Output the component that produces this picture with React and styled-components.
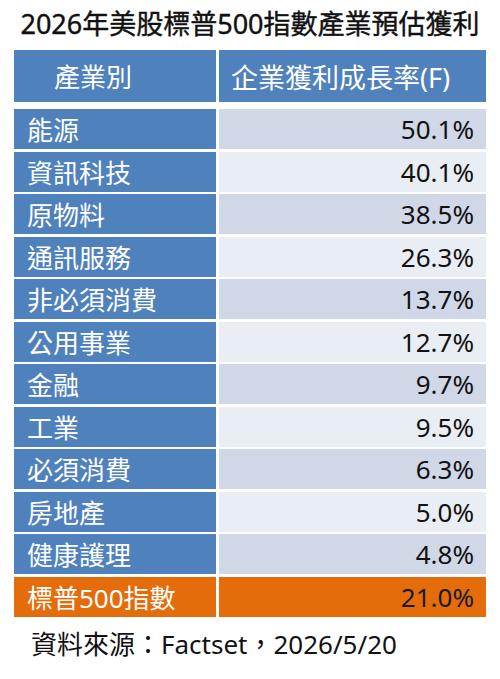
import React from "react";
import styled, { createGlobalStyle } from "styled-components";

const GlobalStyle = createGlobalStyle`
  body {
    margin: 0;
    background: #ffffff;
    font-family: "Noto Sans", "Noto Sans CJK TC", sans-serif;
  }
`;

const Page = styled.div`
  width: 500px;
  height: 679px;
  background: #ffffff;
  display: flex;
  flex-direction: column;
  box-sizing: border-box;
  padding: 6px 14px 0 14px;
`;

const Title = styled.h1`
  margin: 0 0 8px 0;
  font-size: 27px;
  line-height: 36px;
  font-weight: 400;
  -webkit-text-stroke: 0.4px #111111;
  color: #111111;
  text-align: center;
  white-space: nowrap;
`;

const Table = styled.div`
  display: flex;
  flex-direction: column;
  gap: 2.5px;
`;

const Row = styled.div`
  display: grid;
  grid-template-columns: 202px 1fr;
  column-gap: 3px;
  height: ${(p) => (p.$head ? "52px" : "40px")};
  margin-bottom: ${(p) => (p.$head ? "4.5px" : "0")};
`;

const Cell = styled.div`
  display: flex;
  align-items: center;
  box-sizing: border-box;
  font-size: ${(p) => p.$size || "26px"};
  white-space: nowrap;
  background: ${(p) => p.$bg};
  color: ${(p) => p.$color || "#ffffff"};
  justify-content: ${(p) => (p.$right ? "flex-end" : "flex-start")};
  padding-left: ${(p) => p.$pl || "13px"};
  padding-right: ${(p) => (p.$right ? "12px" : "0")};
`;

const Source = styled.div`
  margin-top: 9px;
  padding-left: 17px;
  font-size: 26px;
  line-height: 36px;
  color: #111111;
  white-space: nowrap;
`;

const BLUE = "#4f81bd";
const LIGHT_A = "#d0d8e8";
const LIGHT_B = "#e9edf4";
const ORANGE = "#e46c0a";

const rows = [
  ["能源", "50.1%"],
  ["資訊科技", "40.1%"],
  ["原物料", "38.5%"],
  ["通訊服務", "26.3%"],
  ["非必須消費", "13.7%"],
  ["公用事業", "12.7%"],
  ["金融", "9.7%"],
  ["工業", "9.5%"],
  ["必須消費", "6.3%"],
  ["房地產", "5.0%"],
  ["健康護理", "4.8%"],
];

export default function App() {
  return (
    <>
      <GlobalStyle />
      <Page>
        <Title>2026年美股標普500指數產業預估獲利</Title>
        <Table>
          <Row $head>
            <Cell $bg={BLUE} $pl="40px">產業別</Cell>
            <Cell $bg={BLUE} $pl="12px" $size="27px">企業獲利成長率(F)</Cell>
          </Row>
          {rows.map(([name, value], i) => (
            <Row key={name}>
              <Cell $bg={BLUE}>{name}</Cell>
              <Cell $bg={i % 2 === 0 ? LIGHT_A : LIGHT_B} $color="#111111" $right>
                {value}
              </Cell>
            </Row>
          ))}
          <Row>
            <Cell $bg={ORANGE}>標普500指數</Cell>
            <Cell $bg={ORANGE} $color="#1a1a1a" $right>
              21.0%
            </Cell>
          </Row>
        </Table>
        <Source>資料來源：Factset，2026/5/20</Source>
      </Page>
    </>
  );
}
